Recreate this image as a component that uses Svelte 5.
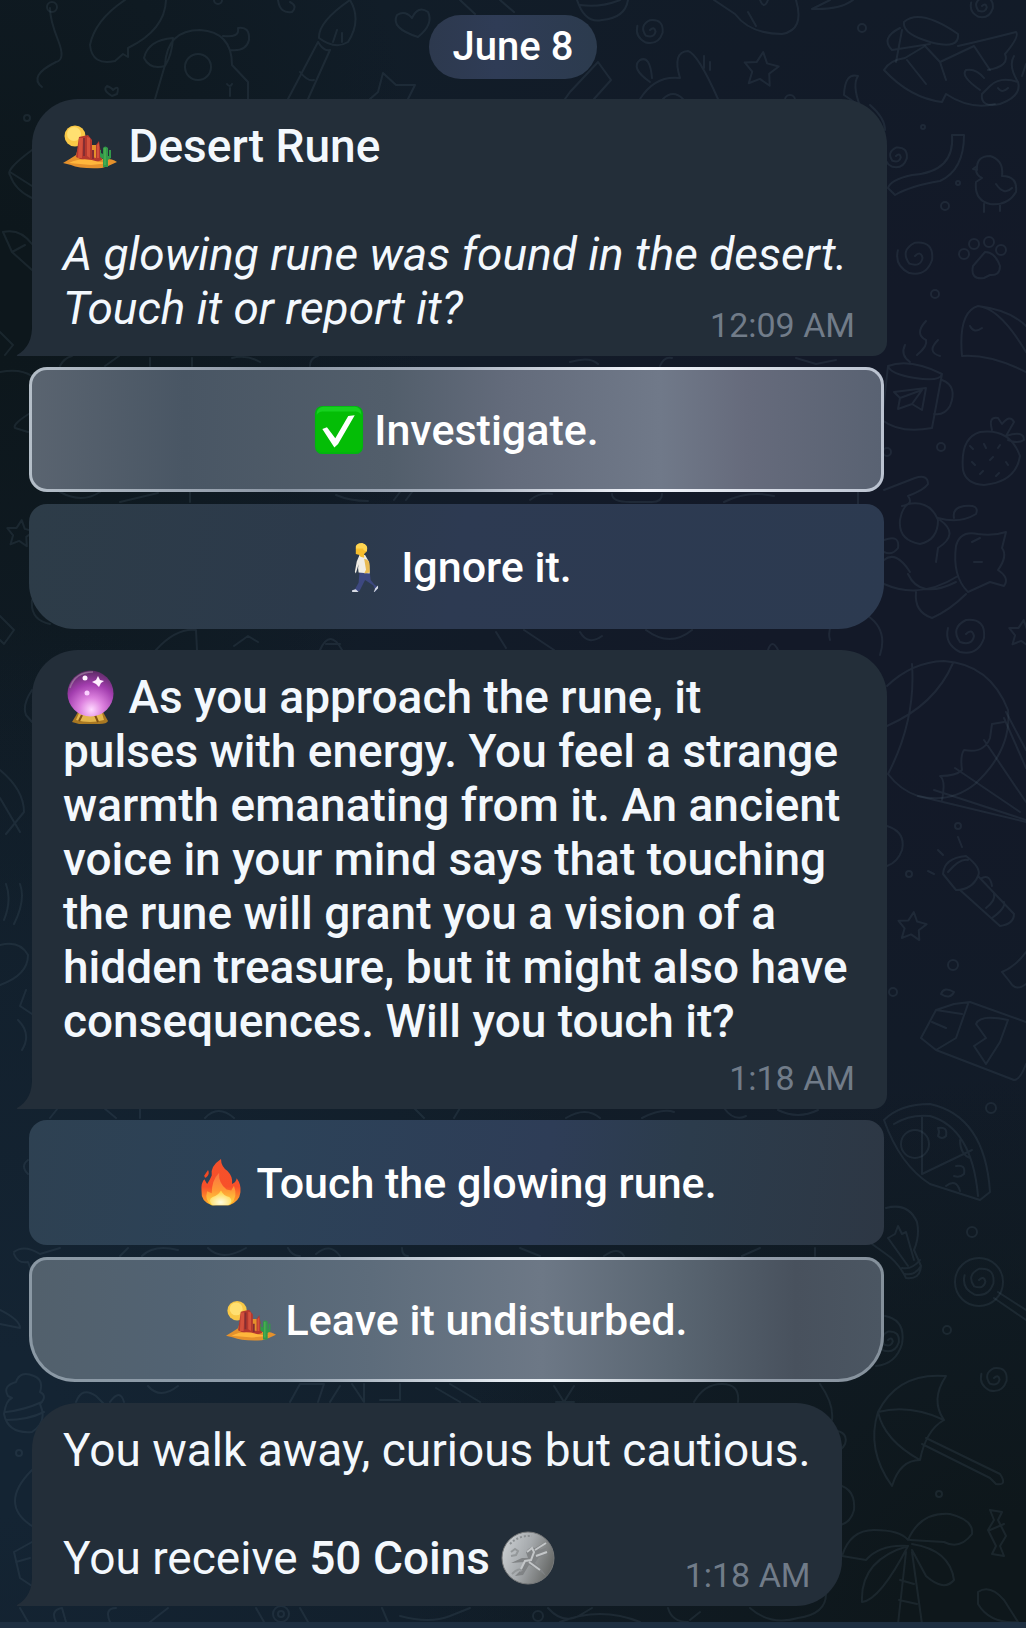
<script>
  const messages = [
    {
      kind: 'wide',
      time: '12:09 AM',
      inlineTime: true,
      lines: [
        { icon: 'desert', parts: [{ text: 'Desert Rune', style: 'strong' }] },
        { parts: [] },
        { parts: [{ text: 'A glowing rune was found in the desert.', style: 'em' }] },
        { parts: [{ text: 'Touch it or report it?', style: 'em' }] },
      ],
      actions: [
        { icon: 'check', label: 'Investigate.', tone: 'lit-one' },
        { icon: 'walker', label: 'Ignore it.', tone: 'dim-one' },
      ],
    },
    {
      kind: 'wide',
      time: '1:18 AM',
      inlineTime: false,
      lines: [
        { icon: 'orb', parts: [{ text: 'As you approach the rune, it', style: 'strong' }] },
        {
          parts: [
            {
              text: 'pulses with energy. You feel a strange warmth emanating from it. An ancient voice in your mind says that touching the rune will grant you a vision of a hidden treasure, but it might also have consequences. Will you touch it?',
              style: 'strong',
            },
          ],
        },
      ],
      actions: [
        { icon: 'fire', label: 'Touch the glowing rune.', tone: 'dim-two' },
        { icon: 'desert', label: 'Leave it undisturbed.', tone: 'lit-two' },
      ],
    },
    {
      kind: 'snug',
      time: '1:18 AM',
      inlineTime: true,
      lines: [
        { parts: [{ text: 'You walk away, curious but cautious.', style: 'plain' }] },
        { parts: [] },
        { parts: [{ text: 'You receive ', style: 'plain' }, { text: '50 Coins', style: 'strong' }], after: 'coin' },
      ],
      actions: [],
    },
  ];

  const spiral = (x, y, r) =>
    `M${x} ${y}q${r * 0.3} ${-r * 0.3} ${r * 0.4} ${r * 0.1}q${-r * 0.1} ${r * 0.5} ${-r * 0.7} ${r * 0.3}q${-r * 0.5} ${-r * 0.7} ${r * 0.3} ${-r * 1.1}q${r} ${-r * 0.1} ${r * 0.9} ${r * 0.9}q${-r * 0.3} ${r * 0.9} ${-r * 1.2} ${r * 0.7}q${-r * 0.8} ${-r * 0.4} ${-r * 0.6} ${-r * 1.2}`;
  const star = (x, y, r) =>
    'M' +
    Array.from({ length: 10 }, (_, i) => {
      const a = (i * Math.PI) / 5 - 1.45;
      const d = i % 2 ? r * 0.5 : r;
      return `${(x + d * Math.cos(a)).toFixed(1)} ${(y + d * Math.sin(a)).toFixed(1)}`;
    }).join('L') +
    'Z';

  const doodles = [
    // string, speech bubble, cow, brush, heart
    'M50 8Q50 20 58 40T56 62Q28 76 42 87',
    'M125 0Q95 20 90 45Q92 66 115 61L123 54L128 57V48Q165 30 166 0',
    'M155 99L165 65Q167 30 200 30Q232 32 232 65L248 82V99M173 38Q148 40 144 58Q150 70 165 66Q172 55 173 38M223 36Q240 38 238 28Q250 26 249 40Q246 52 230 50M227 84q3 4 5 0M230 88v8',
    'M350 0Q318 22 319 38Q335 50 348 42Q362 20 350 0M318 42L288 99M330 50L308 99M318 42Q324 52 330 50M300 72Q308 82 314 80M333 42l4-12M342 42v-9',
    'M418 37Q390 28 397 15Q405 10 412 18Q418 5 428 12Q434 24 418 37',
    'M370 99L378 92L383 73L396 85L415 85L408 99M112 96Q102 90 107 86Q112 88 113 90Q120 84 117 94Z',
    'M32 150Q5 170 10 175Q15 190 32 198M10 172L32 186M3 232Q20 228 32 244M3 232L12 252L32 270M12 252L25 245M0 332L13 345L5 355',
    // top edge and middle
    'M278 0Q280 14 292 12Q298 6 290 2M460 0L475 14M500 0l14 12',
    'M577 0Q585 24 602 20Q625 18 628 0M580 5Q600 8 620 0M565 99L570 92L598 62L611 80L594 99',
    'M640 99Q655 75 680 78Q672 52 688 51Q698 54 718 99M650 82Q630 68 640 60Q650 55 652 78M663 99q10-10 20 0M704 56v12M710 62v8',
    'M714 0L735 14Q750 34 782 34Q805 30 796 0M748 12l8 14M760 0q4 10 8 0M812 9Q840 10 853 0M812 9L830 0',
    'M858 76Q845 72 844 95L860 106Q852 85 858 76M870 105Q885 118 885 130',
    // jug and dog
    'M904 22Q920 8 958 34Q960 50 930 42Q902 34 904 22M900 28Q880 38 892 50L930 44M902 30L896 62M958 46Q985 40 1016 32Q1020 36 1005 54Q1010 66 988 70',
    'M884 70Q890 60 905 58L925 46L940 62L974 46L990 70M884 70Q910 98 942 102L946 94Q970 110 995 104M907 60L926 84M940 62L946 80',
    'M990 86Q1000 76 1018 82Q1022 96 1000 104Q980 108 982 94ZM980 90Q960 76 966 70Q976 68 984 78M1018 82Q1008 66 1014 56M1022 76l4-12M998 88q4 6 10 0',
    // streamer, chick, paw
    'M952 135H964Q964 170 940 181Q910 186 895 195L888 188Q890 180 912 175Q955 172 952 135',
    'M977 170Q976 156 990 156Q1004 160 1002 176Q1018 176 1016 192Q1008 206 990 204Q974 200 976 182L982 178Q974 174 977 166L973 169ZM984 204v8M1000 204v7M996 184q8 12 16 4',
    'M985 252Q995 252 1000 266Q1000 276 990 275L984 278Q970 280 973 266Z',
    // seal, mug, strawberry
    'M962 356Q958 312 978 306Q1000 308 1026 352M978 306Q1010 310 1026 326M970 326q4 8 12 2M962 356Q990 354 1026 372',
    'M926 321Q914 334 926 340Q928 346 917 355M905 345Q900 355 910 362M938 340Q926 352 940 356',
    'M888 366Q910 358 942 374Q940 382 915 378Q890 374 888 366L882 420Q900 434 932 428L942 374M942 380Q958 386 950 406Q944 416 934 414M894 392L926 388L922 410L912 404L898 409L900 398ZM900 398L922 390L912 404',
    'M963 470Q960 438 980 432Q1010 428 1020 456Q1016 482 984 485Q966 484 963 470M992 430Q988 416 998 418L1002 424Q1010 414 1014 422L1006 436Q1024 430 1024 440Q1018 444 1008 440M970 446l3 3M984 444l2 4M998 448l2-3M972 462l3 3M990 460l3-3M1006 462l2 3M980 474l3-3M996 476l3-3',
    // cat on the drum
    'M884 490L915 478Q928 474 928 484Q924 490 908 496Q914 504 902 506M908 504Q930 500 938 520Q938 540 920 544Q898 540 900 520Q902 508 908 504M938 518Q960 524 976 514Q980 504 964 506Q952 508 954 518M940 520Q960 534 938 548L936 562',
    'M956 546Q960 530 978 534Q994 536 1006 532L1002 548Q1008 556 998 570Q1010 578 1004 586L990 582L968 592Q952 576 956 546M972 542l8-4M974 562h8M884 560Q896 550 910 572M884 584Q920 600 958 576M908 574Q920 600 956 582M916 592Q914 612 932 618Q950 610 966 594',
    'M884 540q16-6 14 8q-6 8-14 4M830 640Q826 626 840 618M868 616Q888 630 880 655M858 490v14',
    // hot air balloon
    'M887 686Q912 662 944 661Q990 664 1008 710Q1012 750 975 784Q950 804 918 796Q900 790 888 774M953 663Q935 705 887 726M912 664Q916 720 888 774',
    'M918 796L1026 822M1004 718L1026 768M1006 712L1026 750M942 800Q946 780 940 776Q956 776 962 770Q960 756 964 750Q984 754 990 738L992 724L1004 722M934 790L1026 820M955 768L1020 812M984 740L1026 802',
    // torch, ticket and star
    'M943 874Q944 858 966 856Q982 868 978 876Q972 890 956 890ZM948 872Q960 858 968 860M960 890L1000 926Q1014 924 1014 914L978 876M982 878q8-4 10 8M986 908Q996 900 994 894M992 918Q1006 908 1004 902M958 837l4 10M938 850l5 5M928 871l6 3',
    'M921 1038L936 1010L954 1004L970 1002L1026 1022M921 1038L936 1050L1014 1080Q1020 1080 1026 1064M936 1050L956 1038L968 1004M936 1010L962 1014M932 1022L946 1028M976 1024Q980 1014 1008 1020L1000 1042L986 1064L974 1046L986 1038Z',
    'M941 994Q944 986 954 992Q950 1000 941 994M1026 952Q1016 966 1002 972L1010 982Q1016 992 1026 984M887 826Q906 832 902 850Q898 862 887 866',
    // pizza and bulb
    'M884 1120Q900 1104 930 1104Q985 1116 990 1192L980 1200L930 1184Q900 1165 884 1120M894 1124Q910 1114 930 1116Q972 1128 978 1196M922 1116L922 1174L972 1150M938 1128q10-2 8 8q-4 4-8 0q2-4 0-8M956 1166q10-2 8 8q-4 4-10 2M946 1186q10-8 14 5M960 1140q0 14 10 18',
    'M886 1208Q908 1202 917 1222Q920 1236 914 1250L921 1266Q920 1280 906 1278Q898 1262 886 1254L872 1244M888 1238L908 1266M888 1238L895 1234L898 1226L902 1234L906 1232L914 1260M902 1268q10 2 18-8M905 1274q10 2 16-8',
    // lollipop, umbrella, palm
    'M998 1292L1026 1310M994 1298L1026 1320M885 1316Q906 1320 902 1344Q896 1364 876 1366',
    'M878 1412Q898 1372 946 1376Q930 1400 944 1420Q926 1430 920 1460Q900 1460 892 1486Q866 1450 878 1412M878 1412Q910 1404 944 1420M878 1412Q884 1440 920 1460M926 1438L1000 1474Q1008 1486 996 1484L990 1478M922 1444L990 1478',
    'M842 1556Q850 1530 874 1530Q900 1530 908 1540Q920 1512 950 1514Q974 1520 972 1534Q960 1550 944 1542L910 1540M908 1546Q880 1544 866 1560L842 1556M908 1546Q860 1560 862 1602Q880 1600 908 1546M912 1544Q950 1550 954 1580Q944 1592 926 1576L912 1550M906 1552L898 1624M912 1552L922 1624M900 1580l14 4M899 1600l18 4',
    'M990 1510L1002 1512L998 1520L1006 1536L1000 1546L1004 1556L992 1554L996 1546L988 1530L994 1520ZM990 1530l14-6M978 1592Q990 1584 1004 1600L1018 1622Q990 1624 978 1604Z',
    'M833 1430q16 2 12 14q-4 8-12 6M833 1484Q856 1486 854 1510Q850 1526 833 1526',
    // strips between bubbles and rows
    'M60 366q4-8 12-10M105 366l14-10M150 366v-8M192 366v-8M232 358q14-4 28 4M310 366q0-8 8-10M660 366q4-10 12-8M796 358l20 6l20-4M570 362q20-6 28 2',
    'M0 372Q20 368 32 376M32 412Q12 424 15 428L28 432M60 492q22 12 40 0M120 502l38-9M190 502v-10M336 495q14 6 32 6M394 500l6-8M406 500l6-8M530 500q10-8 22-6M612 494q0 8 18 8h22q10 0 10-8M724 502q24-12 50-6',
    'M32 600Q30 620 50 624M0 616l14 14l-10 14L0 640M156 650Q176 628 196 630L197 650M234 646l14-10l10 6M320 650Q330 628 342 650M326 644h14M496 632l10 16M524 630l30 20M580 632q8 14 22 4M646 630q24 18 46 0M768 650q4-12 10 0',
    'M32 690Q22 705 26 715L32 722M0 770Q24 790 24 812L6 834M0 798l20 34M20 884Q26 900 14 924M6 884Q12 900 4 920M0 945Q20 940 28 955Q28 975 0 985M26 990l-6 16l12 8M18 1020q14 14 4 30',
    'M50 1118l8-10M104 1108l12 10M140 1108v10M205 1118Q218 1104 234 1118M414 1108l10 10M454 1118l6-10M566 1118q20-12 34 0M642 1118q20-10 32-6M724 1108q10 14 22 8M778 1110q20 10 40 0',
    'M28 1160q-8 6 0 14M14 1252Q24 1244 40 1254L60 1248M14 1254q4 10 14 8l4 10M120 1256l8-8M142 1256q12-12 36-6M208 1248q14 14 38 0M288 1248q4 8 12 8M316 1254q14-12 24 2M402 1248q0 8 6 8M520 1248l20 8M604 1256q14-10 20 0M742 1256l18-8M815 1248v8',
    'M0 1310Q20 1320 20 1328L0 1324M8 1396Q2 1386 16 1382Q20 1370 34 1376Q44 1380 40 1392Q48 1396 40 1404Q48 1422 32 1432Q8 1434 4 1414Q6 1400 12 1398ZM6 1412Q24 1410 42 1402M6 1420Q28 1420 44 1412',
    'M76 1402q6-16 20-6l8 8M110 1402q10-14 14 0M148 1386q12 14 30 0M290 1402L300 1384H324L318 1402M330 1402L340 1386M352 1384l12 18V1384M380 1400h20V1384M436 1388L460 1402M450 1384l30 18M554 1386l10 16l10-16M556 1402h18M694 1402Q704 1384 722 1384Q740 1384 738 1402M820 1384Q834 1404 832 1420M32 1470Q-2 1504 32 1526M32 1542L14 1552L20 1578L32 1586M16 1562l14-4',
    'M20 1608l8 14M56 1622q-6-12 6-14l4 14M110 1622q-6-14 6-14M150 1622l18-14M256 1608l8 14M300 1608l8 14M382 1608l6 14M400 1616q30 8 50 0l20-8M548 1608q16 18 34 6l10-6M560 1622q40-16 80 0M668 1608q4 14 20 14M690 1620l10-8M750 1608q20 18 48 10q28-4 28-24',
    spiral(650, 30, 14), spiral(982, 6, 12), spiral(896, 156, 12), spiral(915, 256, 19), spiral(966, 634, 20), spiral(979, 1280, 16), spiral(994, 1378, 14), spiral(888, 1340, 12),
    star(761, 70, 18), star(912, 927, 15), star(1022, 634, 14), star(20, 534, 14),
  ];
  const rings = [
    [862, 28, 4], [923, 127, 2], [958, 183, 2], [945, 206, 4], [935, 294, 4], [941, 447, 4], [887, 452, 4], [958, 826, 3], [909, 874, 3],
    [953, 965, 5], [893, 992, 4], [991, 1108, 5], [972, 1232, 5], [947, 1330, 4], [939, 1494, 3], [27, 118, 3], [19, 1453, 3], [52, 7, 5], [218, 0, 4],
    [198, 67, 13], [915, 1144, 14], [979, 1282, 24], [281, 1614, 8], [281, 1614, 3], [538, 1616, 5], [964, 254, 5], [974, 244, 5], [989, 242, 5], [1001, 250, 5], [790, 100, 5],
  ];
</script>

{#snippet emoji(name)}
  <svg class="emoji" viewBox="0 0 54 54" aria-hidden="true">
    {#if name === 'desert'}
      <circle cx="12" cy="17" r="10.500" fill="#f9c846" />
      <circle cx="11" cy="15" r="7" fill="#ffe071" />
      <path d="M0 44Q7 40 13 36L16 26H34L39 40Q48 39 54 43Q46 47 39 49Q17 50 8 46Z" fill="#e5912c" />
      <path d="M13 38L16 18L25 16L29 21V38L33 39V26L36 22L39 41Q28 46 13 38" fill="#b4382e" />
      <path d="M16 19h4l-1 20h-4M24 18l3 1v20l-3-2M34 26l2-2v15h-2" fill="#d4513c" />
      <path d="M21 19v18M30 31v9" stroke="#842e32" stroke-width="2" />
      <path d="M6 44Q20 37 36 43L47 44L28 46Z" fill="#ffb63c" />
      <path d="M40 40V48H45V41L48 39V31H46V37H45V29Q42 26 40 29V35L38 34V31H37V38Z" fill="#32994a" />
      <path d="M42 29V46" stroke="#59bc53" stroke-width="1" />
    {:else if name === 'check'}
      <rect x="1" y="1" width="52" height="52" rx="8" fill="#02b510" />
      <rect x="3" y="2" width="48" height="24" rx="7" fill="#17d120" />
      <rect x="2" y="7" width="50" height="44" rx="7" fill="#04bd06" />
      <path d="M9 26L14 24L23 36L37 12L44 11L26 42L22 46Z" fill="#fff" />
    {:else if name === 'walker'}
      <g transform="translate(7 0)">
        <path d="M20 32L13 32L12 44L8 51L5 52L6 54L13 53L19 41L28 47L30 52L29 55L33 50L32 48L29 46L25 41L24 32Z" fill="#3d4880" />
        <path d="M9 51L5 52L5 54L12 54ZM30 50L28 55L33 50L33 47Z" fill="#d8dce5" />
        <path d="M13 14H19L23 21L24 34L12 33Q11 27 12 24L9 34L8 32L10 21Z" fill="#f0ede5" />
        <path d="M18 18Q24 19 24 25L24 33L18 34L20 30Z" fill="#e9bb54" />
        <path d="M9 7Q9 2 16 2Q22 3 21 10L18 13V17L14 16L13 14L9 13Z" fill="#f7be2e" />
        <path d="M9 7Q8 1 16 1Q23 3 21 10Q17 10 17 7Z" fill="#ffd551" />
      </g>
    {:else if name === 'orb'}
      <path d="M15 42H40L45 51Q44 54 36 54H16L9 52Z" fill="#a97822" />
      <path d="M16 43H39L41 50Q27 54 13 50Z" fill="#e3b64d" />
      <path d="M19 45l-3 6M32 45l3 7" stroke="#805114" stroke-width="2" />
      <circle cx="27.500" cy="23.500" r="23" fill="url(#orbGlow)" />
      <path d="M7 18Q12 2 30 2" fill="none" stroke="#ae8fae" stroke-width="1.500" opacity=".6" />
      <path d="M35 6L37 10L41 11L38 13L36 17L33 14L29 12L33 10Z" fill="#fff0ff" />
      <circle cx="22" cy="8" r="2.500" fill="#fff2ff" />
      <circle cx="24" cy="23" r="2.500" fill="#fbd0ff" />
    {:else if name === 'fire'}
      <path d="M17 51Q5 47 6 36Q5 27 9 23L12 28Q15 24 17 19Q15 9 27 1Q27 9 34 14Q40 20 39 28Q43 27 44 22Q49 29 48 37Q47 47 36 51Z" fill="url(#flameOuter)" />
      <path d="M13 13L9 19Q9 23 12 20Q15 17 13 13" fill="#f44a23" />
      <path d="M17 51Q9 46 12 36L17 38Q17 24 25 16Q24 27 33 34L38 35L41 30Q46 43 37 50Z" fill="url(#flameMid)" />
      <path d="M18 51Q12 45 18 42Q24 40 27 35Q30 41 36 42Q41 46 35 51Z" fill="url(#flameCore)" />
    {:else}
      <circle cx="27" cy="27" r="26" fill="url(#silver)" stroke="#77797a" />
      <path d="M9 13Q18 4 31 5" fill="none" stroke="#8b8f92" stroke-width="2" stroke-dasharray="2 2" />
      <path d="M25 21Q28 15 34 17L46 10L38 19L48 16L40 23L48 24L38 26L34 32L41 39L45 45L35 37L28 34L22 44L14 45L20 39L23 31L10 32L21 27L27 27Z" fill="#808385" />
      <path d="M26 21L31 17L33 21L30 29L24 30L19 40M34 19L45 12M35 25L46 21M28 31L39 39" fill="none" stroke="#c3c6c8" stroke-width="2" />
      <path d="M10 21l4-3l3 2l-2 4l-5 1M11 43q7-7 10-3" fill="none" stroke="#94989a" stroke-width="2" />
    {/if}
  </svg>
{/snippet}

<main class="chat">
  <svg class="wallpaper" viewBox="0 0 1026 1628" preserveAspectRatio="xMidYMin slice" aria-hidden="true">
    <defs>
      <radialGradient id="orbGlow" cx=".52" cy=".85" r=".85">
        <stop offset="0" stop-color="#ffd9ff" />
        <stop offset=".3" stop-color="#dd82df" />
        <stop offset=".65" stop-color="#a23dae" />
        <stop offset="1" stop-color="#5b2a63" />
      </radialGradient>
      <linearGradient id="flameOuter" x2="0" y2="1">
        <stop offset="0" stop-color="#f4512b" />
        <stop offset=".6" stop-color="#f8502a" />
        <stop offset="1" stop-color="#ffb12a" />
      </linearGradient>
      <linearGradient id="flameMid" x2="0" y2="1">
        <stop offset="0" stop-color="#fb7342" />
        <stop offset=".55" stop-color="#ff9a35" />
        <stop offset="1" stop-color="#ffdc41" />
      </linearGradient>
      <radialGradient id="flameCore" cx=".5" cy=".8" r=".7">
        <stop offset="0" stop-color="#fffde0" />
        <stop offset="1" stop-color="#ffd545" />
      </radialGradient>
      <linearGradient id="silver" x1="0" y1=".3" x2="1" y2=".7">
        <stop offset="0" stop-color="#c9cdd0" />
        <stop offset=".45" stop-color="#a5a9ac" />
        <stop offset="1" stop-color="#626462" />
      </linearGradient>
    </defs>
    {#each doodles as d}<path {d} />{/each}
    {#each rings as [cx, cy, r]}<circle {cx} {cy} {r} />{/each}
  </svg>

  <time class="date">June 8</time>

  {#each messages as message}
    <section class="group">
      <article class="bubble {message.kind}">
        <svg class="tail" viewBox="0 0 17 32" aria-hidden="true"><path d="M17 0H16Q17 22 1 31Q0 32 2 32H17Z" /></svg>
        <div class="text">
          {#each message.lines as line}
            <p>
              {#if line.icon}{@render emoji(line.icon)}{' '}{/if}{#each line.parts as part}{#if part.style === 'strong'}<strong>{part.text}</strong>{:else if part.style === 'em'}<em>{part.text}</em>{:else}{part.text}{/if}{/each}{#if line.after}{' '}{@render emoji(line.after)}{/if}
            </p>
          {/each}
        </div>
        <time class="stamp" class:inline={message.inlineTime}>{message.time}</time>
      </article>
      {#if message.actions.length}
        <div class="actions">
          {#each message.actions as action}
            <button type="button" class={action.tone}>{@render emoji(action.icon)}<span>{action.label}</span></button>
          {/each}
        </div>
      {/if}
    </section>
  {/each}
  <div class="edge"></div>
</main>

<style>
  :global(body) {
    margin: 0;
    background: #111b27;
  }
  .chat {
    position: relative;
    display: flex;
    flex-direction: column;
    box-sizing: border-box;
    min-height: 100vh;
    padding-top: 15px;
    overflow: hidden;
    font-family: Roboto, 'Noto Sans', sans-serif;
    color: #f3f8fd;
    background:
      radial-gradient(ellipse 60% 34% at 100% 100%, #0e171b 20%, transparent 100%),
      radial-gradient(ellipse 60% 50% at 0% 88%, #142433 10%, transparent 100%),
      radial-gradient(ellipse 42% 40% at 0% 18%, #0d171c 10%, transparent 100%),
      radial-gradient(ellipse 75% 50% at 95% 32%, #131928 30%, transparent 100%),
      #111d28;
  }
  .wallpaper {
    position: absolute;
    inset: 0;
    width: 100%;
    height: 100%;
    fill: none;
    stroke: #56687c;
    stroke-opacity: 0.19;
    stroke-width: 2;
    stroke-linejoin: round;
    stroke-linecap: round;
  }
  .date {
    position: relative;
    align-self: center;
    padding: 0 24px;
    border-radius: 32px;
    font-size: 40px;
    font-weight: 500;
    line-height: 64px;
    color: #fff;
    background: linear-gradient(90deg, #2d394e, #2f3c56 40%, #2c3b4e);
  }
  .group {
    position: relative;
    display: flex;
    flex-direction: column;
    gap: 11px;
    margin: 20px 142px 1px 29px;
  }
  .bubble {
    position: relative;
    display: flex;
    flex-direction: column;
    margin: 0 -3px 0 3px;
    padding: 20px 32px 11px 31px;
    border-radius: 46px 46px 14px 0;
    background: #232e39;
  }
  .snug {
    align-self: flex-start;
    padding-right: 31px;
    border-bottom-right-radius: 46px;
  }
  .tail {
    position: absolute;
    right: 100%;
    bottom: 0;
    width: 17px;
    height: 32px;
    margin-right: -1px;
    fill: #232e39;
  }
  .text {
    font-size: 46px;
    line-height: 54px;
  }
  p {
    min-height: 54px;
    margin: 0;
  }
  strong {
    font-weight: 500;
  }
  .emoji {
    width: 54px;
    height: 54px;
    vertical-align: bottom;
  }
  .stamp {
    align-self: flex-end;
    margin-top: 10px;
    font-size: 34px;
    line-height: 40px;
    color: #717c89;
  }
  .stamp.inline {
    margin-top: -30px;
  }
  .actions {
    display: flex;
    flex-direction: column;
    gap: 12px;
  }
  button {
    display: flex;
    align-items: center;
    justify-content: center;
    gap: 10px;
    min-height: 125px;
    padding: 0 24px;
    border: 3px solid transparent;
    border-radius: 18px;
    font: inherit;
    font-size: 43px;
    font-weight: 500;
    color: #fff;
  }
  button .emoji {
    width: 50px;
    height: 50px;
  }
  button:last-child {
    border-radius: 18px 18px 46px 46px;
  }
  .lit-one {
    background:
      linear-gradient(90deg, #5a6470, #495664 18%, #525e6b 42%, #636b7b 56%, #707989 74%, #666b7c 84%, #596272) padding-box,
      linear-gradient(90deg, #b4bec8, #8b96a4 30%, #a7b0be 50%, #f2f5fc 72%, #bac2d0) border-box;
  }
  .dim-one {
    background: linear-gradient(100deg, #2d3c48, #2c3a4b 35%, #2d3a52 50%, #2c3a50) border-box;
  }
  .dim-two {
    background: linear-gradient(98deg, #2e4152, #2c4258 28%, #2e3d57 60%, #2c3c4c 76%, #2d3744) border-box;
  }
  .lit-two {
    background:
      linear-gradient(90deg, #52606c, #526373 18%, #5d6c7b 40%, #6d7886 60%, #596571 76%, #48515d 90%, #4b5662) padding-box,
      linear-gradient(90deg, #8a98a4, #8f9dab 30%, #e3e9f0 55%, #eaf0f5 62%, #939daa 85%, #84909b) border-box;
  }
  .edge {
    position: relative;
    height: 6px;
    margin-top: auto;
    background: #1e2f41;
  }
</style>
